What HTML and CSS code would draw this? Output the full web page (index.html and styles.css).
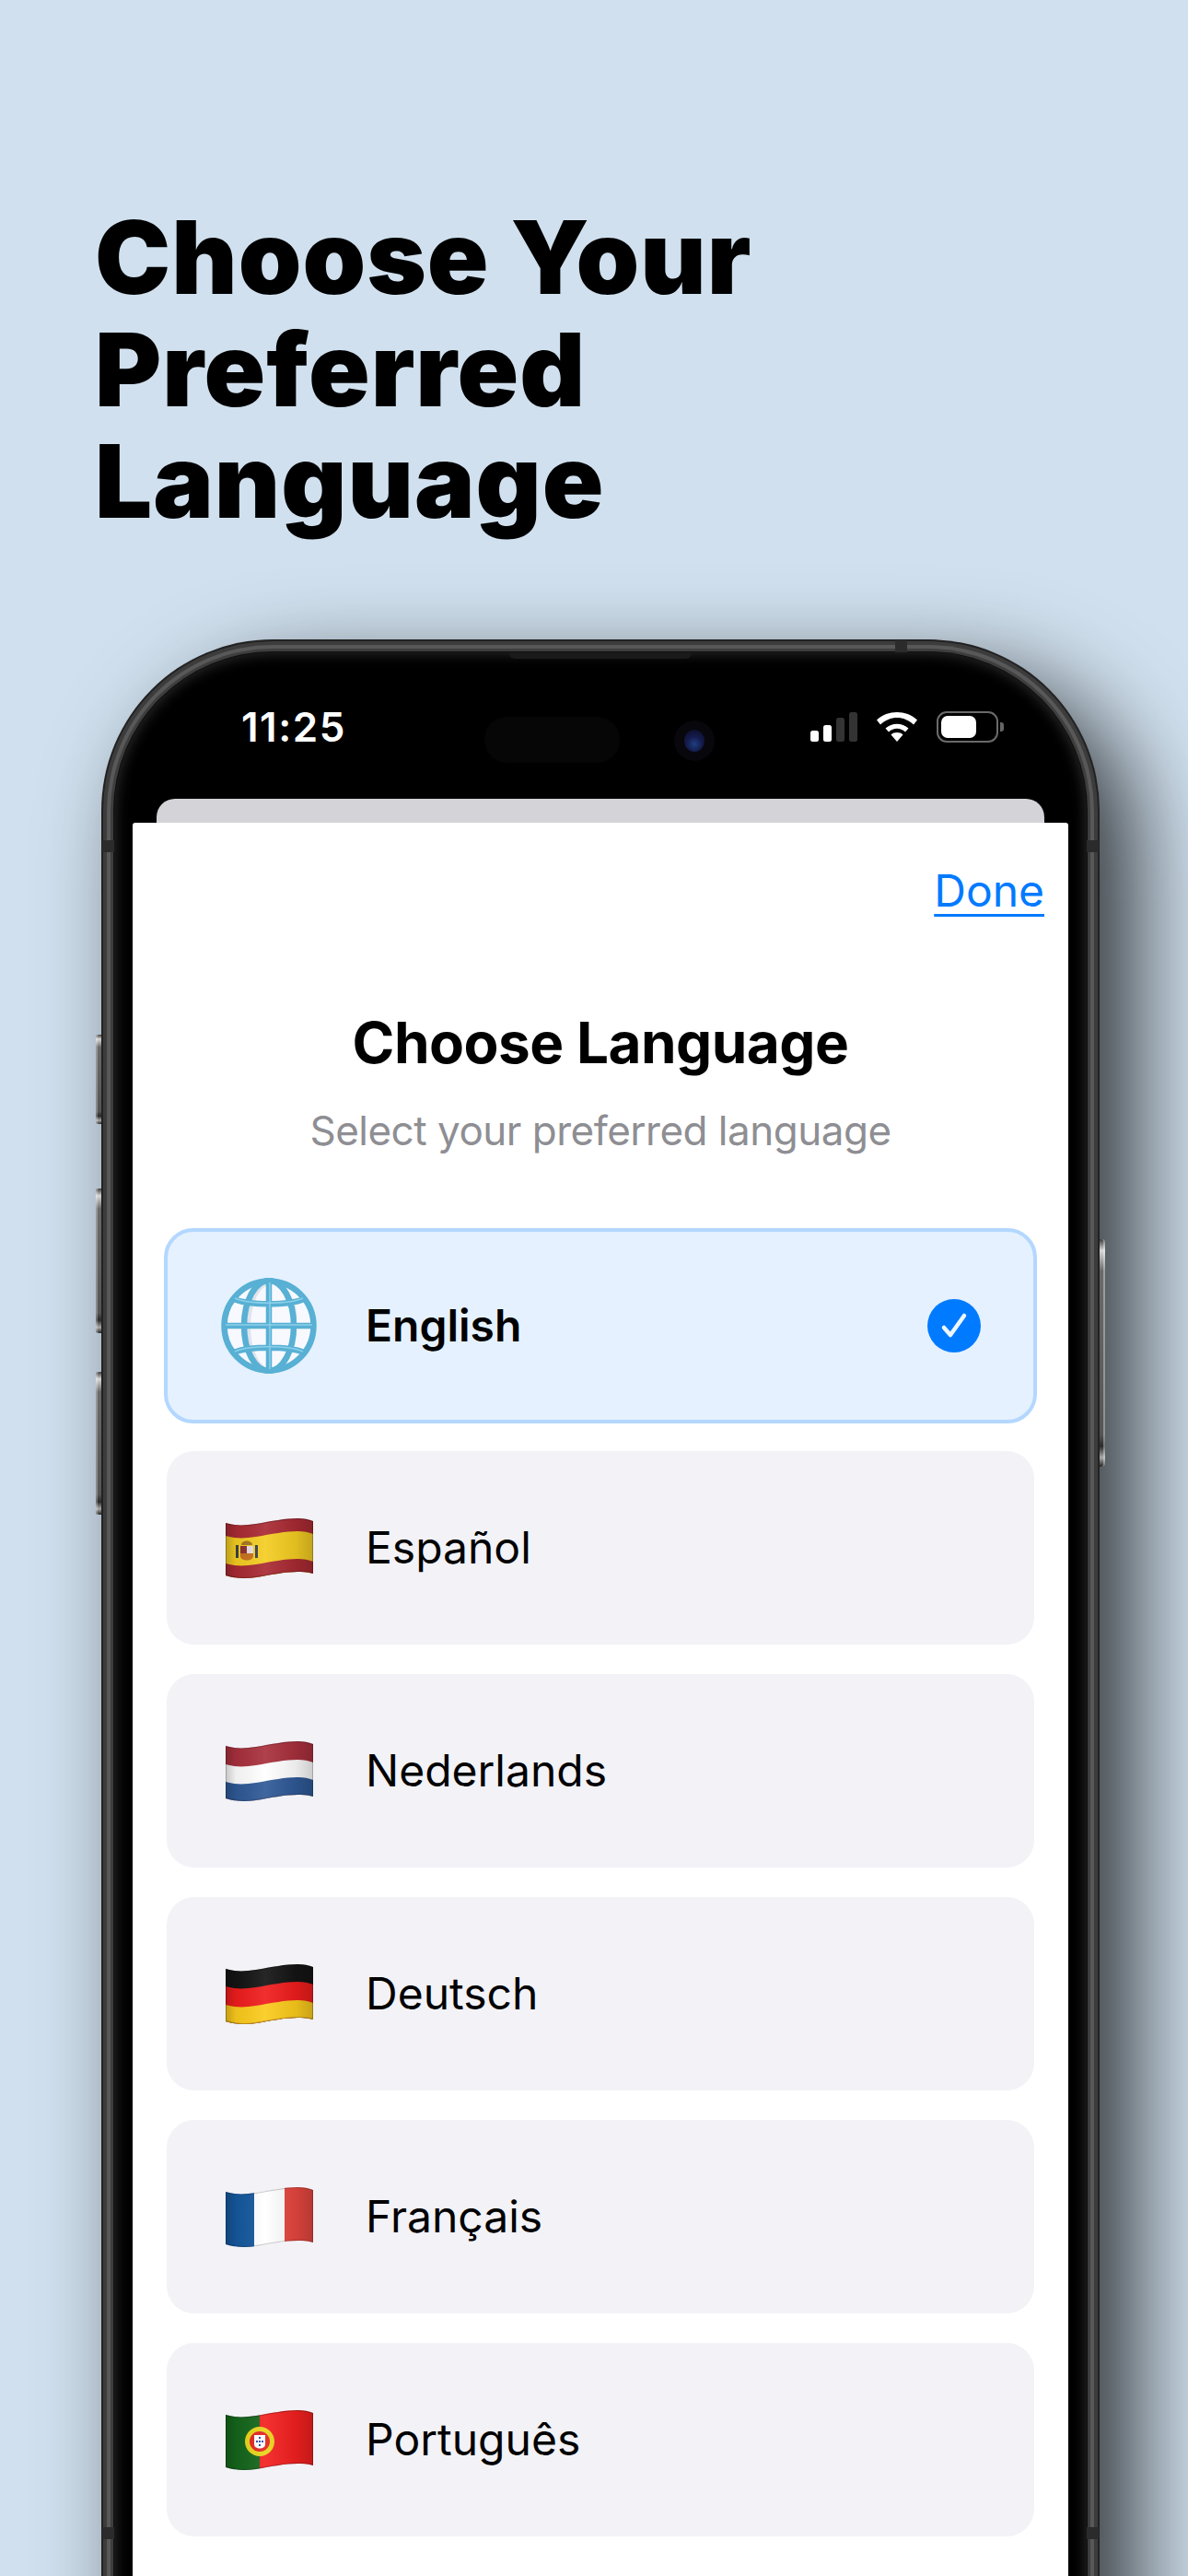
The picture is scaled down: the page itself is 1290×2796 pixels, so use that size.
FILE: index.html
```html
<!DOCTYPE html>
<html>
<head>
    <title>Choose Language</title>
    <link rel="stylesheet" href="styles.css">
</head>
<body>
    <svg class="defs" width="0" height="0">
        <defs>
            <clipPath id="flagClip">
                <path id="flagShape" d="M0 5C10 8 20 8 33 6C50 3 65 0 78 0C85 0 90 1 95 3V60C88 58 83 58 78 58C65 58 50 61 33 64C20 66 10 65 0 62Z"/>
            </clipPath>
            <linearGradient id="flagShade" x1="0" x2="1" y1="0" y2="0">
                <stop offset="0" stop-color="#000" stop-opacity=".22"/>
                <stop offset=".12" stop-color="#000" stop-opacity=".06"/>
                <stop offset=".45" stop-color="#fff" stop-opacity=".08"/>
                <stop offset=".8" stop-color="#000" stop-opacity=".08"/>
                <stop offset="1" stop-color="#000" stop-opacity=".2"/>
            </linearGradient>
        </defs>
    </svg>

    <h1 class="headline">Choose Your<br>Preferred<br>Language</h1>

    <div class="phone">
        <span class="side-btn btn-mute"></span>
        <span class="side-btn btn-up"></span>
        <span class="side-btn btn-down"></span>
        <span class="side-btn btn-power"></span>
        <span class="antenna ant-top"></span>
        <span class="antenna ant-left"></span>
        <span class="antenna ant-right"></span>
        <span class="antenna ant-left-low"></span>
        <span class="antenna ant-right-low"></span>
        <span class="speaker"></span>

        <div class="status-bar">
            <span class="time">11:25</span>
            <div class="island"></div>
            <div class="camera"><span class="lens"></span></div>
            <div class="status-icons">
                <div class="signal">
                    <span class="bar bar-1"></span>
                    <span class="bar bar-2"></span>
                    <span class="bar bar-3"></span>
                    <span class="bar bar-4"></span>
                </div>
                <svg class="wifi" viewBox="0 0 44 32" width="44" height="32">
                    <path d="M22 32L15.500 24.500C19 21.300 25 21.300 28.500 24.500Z" fill="#fff"/>
                    <path d="M9.500 17.500C16.500 11 27.500 11 34.500 17.500L31 21.500C25.500 16.500 18.500 16.500 13 21.500Z" fill="#fff"/>
                    <path d="M0 8.500C12 -2.800 32 -2.800 44 8.500L40 13.500C29.500 3.500 14.500 3.500 4 13.500Z" fill="#fff"/>
                </svg>
                <div class="battery"><span class="battery-fill"></span></div>
                <span class="battery-nub"></span>
            </div>
        </div>

        <div class="sheet-back"></div>
        <div class="sheet">
            <div class="sheet-top"><a class="done" href="#">Done</a></div>
            <h2 class="sheet-title">Choose Language</h2>
            <p class="sheet-sub">Select your preferred language</p>

            <div class="lang-list">
                <div class="lang lang-active">
                    <div class="lang-icon">
                        <svg viewBox="0 0 104 104" width="104" height="104">
                            <circle cx="52" cy="52" r="50" fill="#f7f9fe"/>
                            <ellipse cx="52" cy="52" rx="27" ry="49" fill="#dfe4ec"/>
                            <ellipse cx="55" cy="53" rx="23" ry="46" fill="#f7f9fe"/>
                            <path d="M60 6C78 20 80 40 76 46L82 46C84 30 76 14 60 6Z" fill="#dfe4ec"/>
                            <g fill="none" stroke="#58b0d4" stroke-width="6.500">
                                <circle cx="52" cy="52" r="48.500"/>
                                <ellipse cx="52" cy="52" rx="27" ry="49"/>
                                <path d="M52 3V101M3 52H101M14 23C30 30 74 30 90 23M14 81C30 74 74 74 90 81"/>
                            </g>
                            <g fill="none" stroke="#8ad0e9" stroke-width="1.500">
                                <path d="M53 5V99M5 51H99M15 22C30 29 74 29 89 22M15 80C30 73 74 73 89 80"/>
                            </g>
                        </svg>
                    </div>
                    <span class="lang-name">English</span>
                    <span class="lang-check">
                        <svg viewBox="0 0 58 58" width="58" height="58">
                            <circle cx="29" cy="29" r="29" fill="#007aff"/>
                            <path d="M18 31L25 39L40 18" fill="none" stroke="#eef6ff" stroke-width="4.500" stroke-linecap="round" stroke-linejoin="round"/>
                        </svg>
                    </span>
                </div>

                <div class="lang">
                    <div class="lang-icon">
                        <svg class="flag" viewBox="0 0 95 67" width="95" height="67">
                            <g clip-path="url(#flagClip)" transform="translate(0 1)">
                                <rect width="95" height="67" fill="#a92a33"/>
                                <use href="#flagShape" transform="translate(0 14)" fill="#f4cd22"/>
                                <use href="#flagShape" transform="translate(0 44)" fill="#a92a33"/>
                                <path d="M11 29H14V43H11ZM32 29H35V43H32Z" fill="#38414a"/>
                                <path d="M16 30H30V41C30 47 16 47 16 41Z" fill="#c8701e"/>
                                <rect x="23" y="30" width="7" height="8" fill="#e6dfe3"/>
                                <rect x="16" y="30" width="7" height="8" fill="#8c3130"/>
                                <path d="M17 29C17 23 29 23 29 29Z" fill="#a5781e"/>
                                <use href="#flagShape" fill="url(#flagShade)"/>
                                <use href="#flagShape" fill="none" stroke="#000" stroke-opacity=".25" stroke-width="2"/>
                            </g>
                        </svg>
                    </div>
                    <span class="lang-name">Español</span>
                </div>

                <div class="lang">
                    <div class="lang-icon">
                        <svg class="flag" viewBox="0 0 95 67" width="95" height="67">
                            <g clip-path="url(#flagClip)" transform="translate(0 1)">
                                <rect width="95" height="67" fill="#a8303d"/>
                                <use href="#flagShape" transform="translate(0 20)" fill="#fff"/>
                                <use href="#flagShape" transform="translate(0 39)" fill="#2f5996"/>
                                <use href="#flagShape" fill="url(#flagShade)"/>
                                <use href="#flagShape" fill="none" stroke="#000" stroke-opacity=".2" stroke-width="2"/>
                            </g>
                        </svg>
                    </div>
                    <span class="lang-name">Nederlands</span>
                </div>

                <div class="lang">
                    <div class="lang-icon">
                        <svg class="flag" viewBox="0 0 95 67" width="95" height="67">
                            <g clip-path="url(#flagClip)" transform="translate(0 1)">
                                <rect width="95" height="67" fill="#141414"/>
                                <use href="#flagShape" transform="translate(0 19)" fill="#f01d1d"/>
                                <use href="#flagShape" transform="translate(0 39)" fill="#fbcb1c"/>
                                <use href="#flagShape" fill="url(#flagShade)"/>
                                <use href="#flagShape" fill="none" stroke="#000" stroke-opacity=".25" stroke-width="2"/>
                            </g>
                        </svg>
                    </div>
                    <span class="lang-name">Deutsch</span>
                </div>

                <div class="lang">
                    <div class="lang-icon">
                        <svg class="flag" viewBox="0 0 95 67" width="95" height="67">
                            <g clip-path="url(#flagClip)" transform="translate(0 1)">
                                <rect width="31" height="67" fill="#15589e"/>
                                <rect x="31" width="33" height="67" fill="#fff"/>
                                <rect x="64" width="31" height="67" fill="#e5463f"/>
                                <use href="#flagShape" fill="url(#flagShade)"/>
                                <use href="#flagShape" fill="none" stroke="#000" stroke-opacity=".2" stroke-width="2"/>
                            </g>
                        </svg>
                    </div>
                    <span class="lang-name">Français</span>
                </div>

                <div class="lang">
                    <div class="lang-icon">
                        <svg class="flag" viewBox="0 0 95 67" width="95" height="67">
                            <g clip-path="url(#flagClip)" transform="translate(0 1)">
                                <rect width="37" height="67" fill="#14661b"/>
                                <rect x="37" width="58" height="67" fill="#f3201f"/>
                                <circle cx="37" cy="34" r="16" fill="#e8d41a"/>
                                <circle cx="37" cy="34" r="11" fill="#e3231f"/>
                                <path d="M31 27H43V37C43 43 31 43 31 37Z" fill="#fff"/>
                                <path d="M36 29H38V31H36ZM33 33H35V35H33ZM36 33H38V35H36ZM39 33H41V35H39ZM36 37H38V39H36Z" fill="#2a46b0"/>
                                <use href="#flagShape" fill="url(#flagShade)"/>
                                <use href="#flagShape" fill="none" stroke="#000" stroke-opacity=".25" stroke-width="2"/>
                            </g>
                        </svg>
                    </div>
                    <span class="lang-name">Português</span>
                </div>
            </div>
        </div>
    </div>
</body>
</html>
```

FILE: styles.css
```css
html, body {
    margin: 0;
    padding: 0;
}

body {
    width: 1290px;
    height: 2796px;
    overflow: hidden;
    background-color: #d0e0ee;
    font-family: 'Inter', sans-serif;
    color: #000;
}

.defs {
    display: block;
    height: 0;
}

.headline {
    margin: 0;
    padding: 219px 0 0 103px;
    font-size: 110px;
    font-weight: 900;
    line-height: 121.5px;
    letter-spacing: 1px;
    color: #000;
}

/* phone body, frame is drawn with rings of box-shadow */
.phone {
    position: relative;
    width: 1056px;
    height: 2200px;
    margin: 124.5px 0 0 124px;
    background-color: #000;
    border-radius: 172px 172px 0 0;
    box-shadow:
        0 0 0 1px #101010,
        0 0 0 4px #3e3e3e,
        0 0 0 8px #585858,
        0 0 0 12px #3c3c3c,
        0 0 0 14px #222,
        40px 40px 100px 14px rgba(0, 0, 0, .75),
        inset 0 0 16px rgba(255, 255, 255, .2);
}

.side-btn {
    position: absolute;
    left: -20px;
    width: 6px;
    border-radius: 3px 0 0 3px;
    background: linear-gradient(#3a3a3a 0, #d8d8d8 5%, #6a6a6a 14%, #555 86%, #2a2a2a 91%, #aaa 96%, #222 100%);
    box-shadow: inset 2px 0 0 rgba(255, 255, 255, .3);
}

.btn-mute { top: 415px; height: 97px; }
.btn-up { top: 582px; height: 157px; }
.btn-down { top: 781px; height: 155px; }

.btn-power {
    left: auto;
    right: -20px;
    top: 637px;
    height: 247px;
    border-radius: 0 3px 3px 0;
    box-shadow: inset -2px 0 0 rgba(255, 255, 255, .35);
}

.antenna {
    position: absolute;
    background-color: #2b2b2b;
}

.ant-top { top: -13px; left: 848px; width: 13px; height: 13px; }
.ant-left { top: 204px; left: -13px; width: 13px; height: 13px; }
.ant-right { top: 204px; right: -13px; width: 13px; height: 13px; }
.ant-left-low { top: 2035px; left: -13px; width: 13px; height: 13px; }
.ant-right-low { top: 2035px; right: -13px; width: 13px; height: 13px; }

.speaker {
    position: absolute;
    top: 0;
    left: 429px;
    width: 198px;
    height: 7px;
    background-color: #1a1a1a;
    border-radius: 0 0 6px 6px;
}

.status-bar {
    position: relative;
    height: 159px;
}

.time {
    position: absolute;
    left: 138px;
    top: 54px;
    font-size: 44px;
    line-height: 54px;
    font-weight: 600;
    letter-spacing: 1.500px;
    color: #fff;
}

.island {
    position: absolute;
    left: 402px;
    top: 70px;
    width: 147px;
    height: 50px;
    background-color: #060606;
    border-radius: 25px;
}

.camera {
    position: absolute;
    left: 608px;
    top: 74px;
    width: 44px;
    height: 44px;
    display: flex;
    align-items: center;
    justify-content: center;
    background-color: #07070c;
    border-radius: 50%;
}

.lens {
    width: 22px;
    height: 24px;
    border-radius: 50%;
    background: radial-gradient(circle at 50% 65%, #1f3f80 0, #141a4a 45%, #0b0b22 100%);
}

.status-icons {
    position: absolute;
    left: 756px;
    top: 64px;
    display: flex;
    align-items: flex-end;
    height: 34px;
}

.signal {
    display: flex;
    align-items: flex-end;
    gap: 5px;
    margin-bottom: 1px;
}

.bar {
    width: 9px;
    border-radius: 2.5px;
    background-color: #fff;
}

.bar-1 { height: 12px; }
.bar-2 { height: 18px; }
.bar-3 { height: 26px; background-color: #333; }
.bar-4 { height: 32px; background-color: #333; }

.wifi {
    margin: 0 0 1px 21px;
}

.battery {
    box-sizing: border-box;
    width: 67px;
    height: 34px;
    margin-left: 21px;
    padding: 3px;
    border: 2px solid #6a6a6a;
    border-radius: 11px;
}

.battery-fill {
    display: block;
    width: 38px;
    height: 24px;
    background-color: #fff;
    border-radius: 7px;
}

.battery-nub {
    width: 4px;
    height: 10px;
    margin: 0 0 12px 2px;
    background-color: #666;
    border-radius: 0 3px 3px 0;
}

.sheet-back {
    height: 26px;
    margin: 0 46px;
    background-color: #d4d3d8;
    border-radius: 20px 20px 0 0;
}

.sheet {
    margin: 0 20px;
    height: 2015px;
    background-color: #fff;
    border-radius: 3px 3px 0 0;
}

.sheet-top {
    display: flex;
    justify-content: flex-end;
    padding: 46px 26px 0 0;
}

.done {
    font-size: 48px;
    line-height: 56px;
    color: #007aff;
    text-decoration: underline;
    text-decoration-thickness: 3px;
    text-underline-offset: 8px;
}

.sheet-title {
    margin: 98.5px 0 0;
    font-size: 62px;
    line-height: 76px;
    font-weight: 700;
    letter-spacing: -.5px;
    text-align: center;
}

.sheet-sub {
    margin: 27.5px 0 0;
    font-size: 44px;
    line-height: 60px;
    letter-spacing: -.5px;
    color: #8e8e93;
    text-align: center;
}

.lang-list {
    display: flex;
    flex-direction: column;
    gap: 32px;
    margin: 76px 34px 0;
}

.lang {
    box-sizing: border-box;
    display: flex;
    align-items: center;
    height: 210px;
    margin: 0 3px;
    padding: 0 59px;
    background-color: #f2f2f7;
    border-radius: 30px;
}

.lang-active {
    height: 212px;
    margin: 0 0 -2px;
    padding: 0 58px;
    background-color: #e5f1ff;
    border: 4px solid #b3d7ff;
    border-radius: 32px;
}

.lang-icon {
    display: flex;
    align-items: center;
    justify-content: center;
    width: 104px;
    height: 104px;
    margin-right: 53px;
}

.lang-name {
    flex: 1;
    font-size: 48px;
    line-height: 60px;
    font-weight: 400;
}

.lang-active .lang-name {
    font-weight: 600;
}

.lang-check {
    display: flex;
    margin-right: -1px;
}
```
